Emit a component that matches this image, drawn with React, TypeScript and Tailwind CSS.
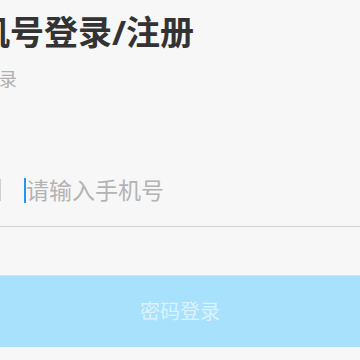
export default function App() {
  return (
    <div
      className="w-[360px] h-[360px] overflow-hidden bg-[#f7f7f7]"
      style={{ fontFamily: '"Noto Sans", "Noto Sans CJK SC", sans-serif' }}
    >
      {/* Title */}
      <div className="mt-[12px] h-[40px] -ml-[58px] whitespace-nowrap text-[34px] leading-[40px] font-bold text-[#333333]">
        手机号登录/注册
      </div>

      {/* Subtitle, cut off at the left edge */}
      <div className="mt-[15px] h-[24px] w-[17px] flex justify-end">
        <span className="whitespace-nowrap text-[18px] leading-[24px] text-[#b0b0b0]">
          未注册的手机号验证后自动登录
        </span>
      </div>

      {/* Phone input */}
      <div className="mt-[63px] h-[73px] box-border border-b border-[#d4d4d4] flex items-center">
        <div className="-ml-[62px] flex items-center">
          <span className="text-[20px] text-[#333333] w-[50px]">+86</span>
          <span className="ml-[11px] w-[2px] h-[22px] bg-[#cfcfcf]" />
          <span className="ml-[23px] w-[2px] h-[25px] bg-[#2196f3]" />
          <span className="text-[23px] leading-[30px] text-[#b3b3b3] whitespace-nowrap">
            请输入手机号
          </span>
        </div>
      </div>

      {/* Button */}
      <button className="mt-[48px] w-full h-[72px] bg-[#a8e1fc] border-t border-[#c4ebfd] flex items-center justify-center text-[20px] text-white/60">
        密码登录
      </button>
    </div>
  )
}
